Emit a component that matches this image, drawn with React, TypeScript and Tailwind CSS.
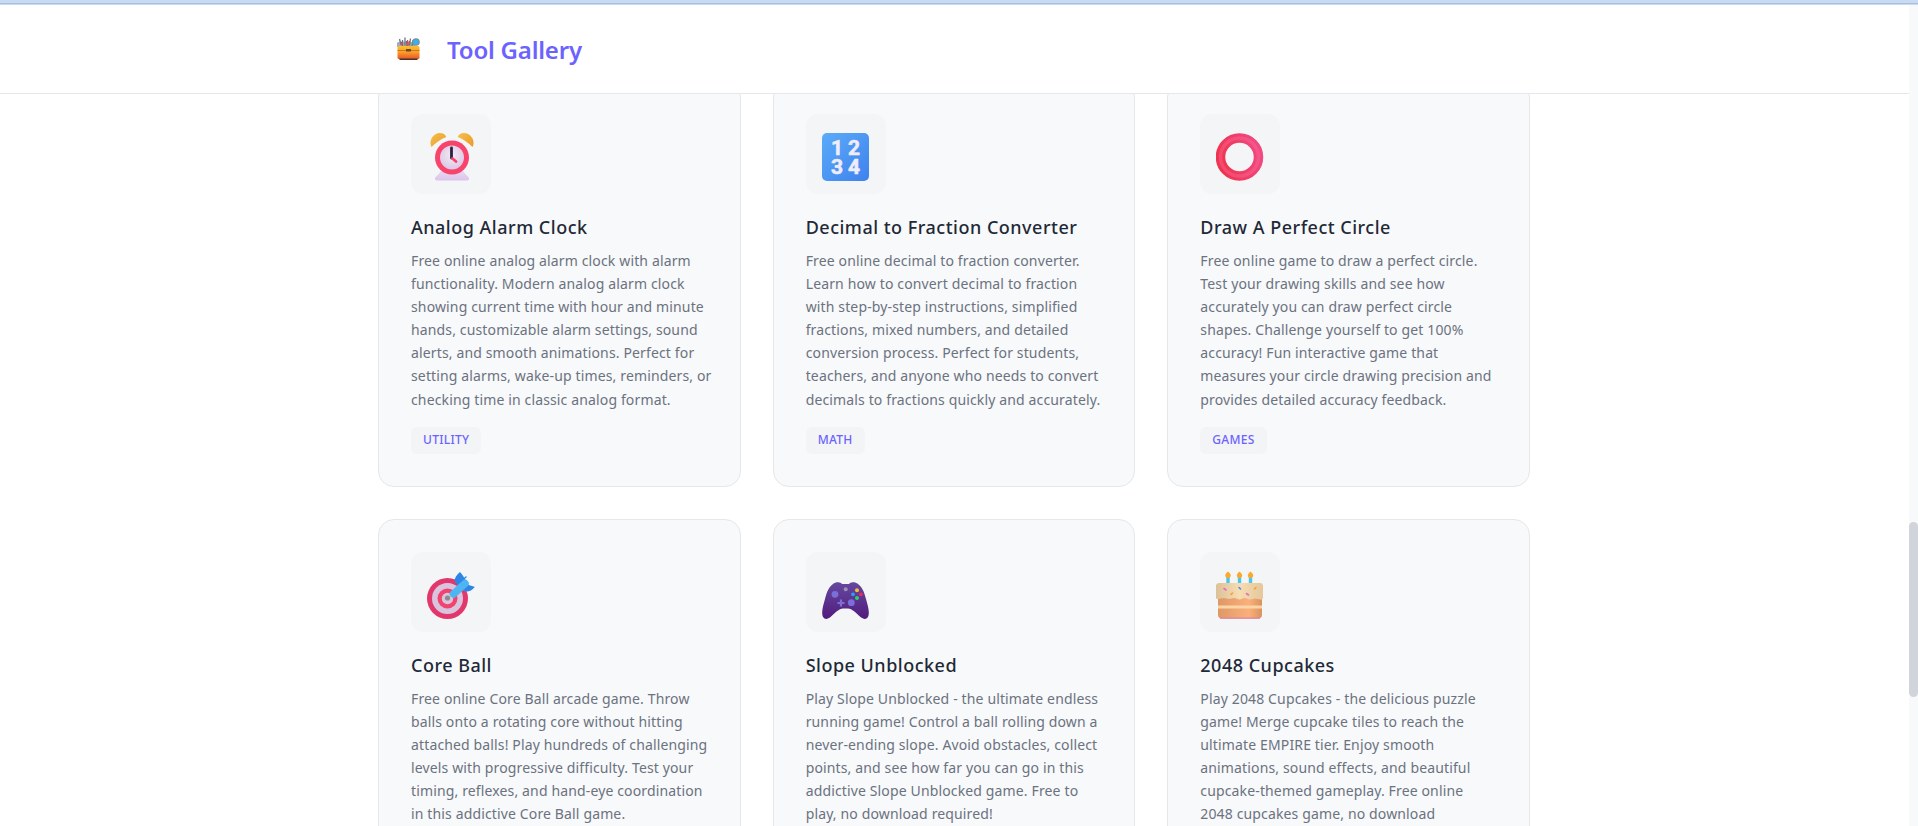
import React from "react";

const AlarmIcon = () => (
  <svg width="48" height="48" viewBox="0 0 48 48">
    <defs>
      <linearGradient id="bell" x1="0" y1="0" x2="1" y2="1"><stop offset="0" stopColor="#f7c04a" /><stop offset="1" stopColor="#e9992c" /></linearGradient>
      <linearGradient id="base" x1="0" y1="0" x2="0" y2="1"><stop offset="0" stopColor="#e8d8f0" /><stop offset="1" stopColor="#dcc4ec" /></linearGradient>
      <radialGradient id="face" cx="0.5" cy="0.4" r="0.65"><stop offset="0" stopColor="#f3ebf3" /><stop offset="1" stopColor="#dac4e6" /></radialGradient>
    </defs>
    <path d="M14 38H36C38 41 41 43 42 45C42.500 46.500 41.500 47.500 40 47.500H10C8.500 47.500 7.500 46.500 8 45C9 43 12 41 14 38z" fill="url(#base)" />
    <path d="M4.500 14C1 7.500 6.500 0 13 0c3 0 5.500 1.500 6.200 4C14 6 8.500 10 4.500 14z" fill="url(#bell)" />
    <path d="M45.500 14C49 7.500 43.500 0 37 0c-3 0-5.500 1.500-6.200 4C36 6 41.500 10 45.500 14z" fill="url(#bell)" />
    <circle cx="25" cy="24.500" r="17" fill="#f8436a" />
    <circle cx="25" cy="24.500" r="12" fill="url(#face)" />
    <path d="M24.500 15V25" stroke="#2c2140" strokeWidth="2.800" strokeLinecap="round" />
    <path d="M25.500 25.500l3.500 3" stroke="#f8436a" strokeWidth="2.800" strokeLinecap="round" />
  </svg>
);

const NumbersIcon = () => (
  <svg width="48" height="48" viewBox="0 0 48 48">
    <defs>
      <linearGradient id="num" x1="0" y1="0" x2="1" y2="1"><stop offset="0" stopColor="#5cabf8" /><stop offset="1" stopColor="#3e82ee" /></linearGradient>
    </defs>
    <rect x="0" y="0" width="47" height="48" rx="5" fill="url(#num)" />
    <g fill="#f0ecfc" stroke="#f0ecfc" strokeWidth="0.600" strokeLinejoin="round" fontFamily="Roboto, sans-serif" fontWeight="700" fontSize="21" textAnchor="middle">
      <text x="15" y="21.500">1</text>
      <text x="32" y="21.500">2</text>
      <text x="15" y="41">3</text>
      <text x="32" y="41">4</text>
    </g>
  </svg>
);

const RingIcon = () => (
  <svg width="48" height="48" viewBox="0 0 48 48">
    <defs>
      <linearGradient id="ring" x1="0" y1="0.6" x2="1" y2="0.3"><stop offset="0" stopColor="#ee3550" /><stop offset="1" stopColor="#f0487f" /></linearGradient>
    </defs>
    <circle cx="23.500" cy="24" r="19" fill="none" stroke="url(#ring)" strokeWidth="9.500" />
    <circle cx="23.500" cy="24" r="19" fill="none" stroke="#ff6a9e" strokeOpacity="0.4" strokeWidth="3.500" />
  </svg>
);

const TargetIcon = () => (
  <svg width="48" height="48" viewBox="0 0 48 48">
    <circle cx="20.500" cy="27.500" r="20.500" fill="#e2376b" />
    <circle cx="20.500" cy="27.500" r="15.500" fill="#d9c3dd" />
    <circle cx="20.500" cy="27.500" r="10" fill="#f0436f" />
    <circle cx="20.500" cy="27.500" r="5.700" fill="#d8c6da" />
    <circle cx="20.500" cy="27" r="2.600" fill="#8f8895" />
    <path d="M33 1c-3.500 3-5.500 6-5.500 9.500L37 20c3.500 1.500 7.500 0 10.800-4-2.500-1-5-1.200-6.800-2.500-.5-2-.5-3.500-2.500-4.500C37 6.500 35.500 3.500 33 1z" fill="#2d86e6" />
    <path d="M26.500 23L38 12.500" stroke="#4db6f2" strokeWidth="7.500" strokeLinecap="round" />
    <path d="M32.500 11.500L39 6" stroke="#2f8ce8" strokeWidth="1.500" strokeLinecap="round" />
  </svg>
);

const PadIcon = () => (
  <svg width="48" height="48" viewBox="0 0 48 48">
    <defs>
      <linearGradient id="pad" x1="0" y1="0" x2="0" y2="1"><stop offset="0" stopColor="#65499f" /><stop offset="1" stopColor="#521c7d" /></linearGradient>
    </defs>
    <path d="M11 13C13 11 17 10.500 19 12L20 13H27L28 12C30 10.500 34 11 36 13C40 16 42 20 44 28C46 35 48 42 46 46C44 49 41 48 38.500 46C34 42 30 37.500 26 37.500H21C17 37.500 13 42 8.500 46C6 48 3 49 1 46C-1 42 1 35 3 28C5 20 7 16 11 13z" fill="url(#pad)" />
    <circle cx="13" cy="23.300" r="3.400" fill="#7b6ed8" />
    <circle cx="29.300" cy="31.700" r="3.400" fill="#7b6ed8" />
    <path d="M15.500 32h7M19 28.500v7" stroke="#7b6ed8" strokeWidth="2.200" />
    <circle cx="23.700" cy="18.300" r="2" fill="#a08fb4" />
    <circle cx="35" cy="19.300" r="2" fill="#f7bc3c" />
    <circle cx="31" cy="23.300" r="1.900" fill="#2f9cf4" />
    <circle cx="39" cy="23.300" r="1.900" fill="#ef2a58" />
    <circle cx="35" cy="27" r="2" fill="#2bd06f" />
  </svg>
);

const CakeIcon = () => (
  <svg width="48" height="48" viewBox="0 0 48 48">
    <defs>
      <linearGradient id="ice" x1="0" y1="0" x2="1" y2="0"><stop offset="0" stopColor="#dcc198" /><stop offset="0.5" stopColor="#f8dcb2" /><stop offset="1" stopColor="#e4c89c" /></linearGradient>
      <linearGradient id="body" x1="0" y1="0" x2="1" y2="0"><stop offset="0" stopColor="#dd9866" /><stop offset="0.7" stopColor="#fbb07b" /><stop offset="1" stopColor="#d9935f" /></linearGradient>
    </defs>
    {[12, 23.500, 34.500].map((x) => (
      <g key={x}>
        <rect x={x - 1.700} y="6" width="3.400" height="7" fill="#4bc7ee" />
        <path d={`M${x} 0.500c1.500 1.500 2.700 2.700 2.700 4s-1.200 2.500-2.700 2.500-2.700-1.200-2.700-2.500 1.200-2.500 2.700-4z`} fill="#ffa726" />
      </g>
    ))}
    <path d="M2 26h44v18c0 2-1.500 3.500-3.500 3.500h-37C3.500 47.500 2 46 2 44z" fill="url(#body)" />
    <rect x="2" y="34.500" width="44" height="3" fill="#fbd5a5" />
    <path d="M4 47.200h40" stroke="#e37fa0" strokeWidth="1.200" />
    <path d="M0 15c0-2 1.500-3 3-3h41c2 0 3 1 3 3v12c0 1-1 1.500-2.500 1.500-2.500 0-3.500-1-5.500-1s-3 1-5 1-3.500-1.500-5.500-1.500-3 1.500-5 1.500-3-1.500-5.500-1.500-3 1-5 1-3-1-5-1S2 28.500 1 28c-1-.4-1-1-1-2z" fill="url(#ice)" />
    <path d="M8 17.500l2 1.500M30.500 22.500l2 1.500" stroke="#e36fc0" strokeWidth="1.600" strokeLinecap="round" />
    <path d="M38.500 18l1.500-1.500M15 23.500l1.500-1.500" stroke="#f4a22f" strokeWidth="1.600" strokeLinecap="round" />
    <path d="M23 16.500l1.500 1.500" stroke="#4c8be8" strokeWidth="1.600" strokeLinecap="round" />
  </svg>
);

const ToolboxIcon = () => (
  <svg width="24" height="24" viewBox="0 0 24 24">
    <defs>
      <linearGradient id="tb" x1="0" y1="0" x2="0" y2="1"><stop offset="0" stopColor="#fcc02e" /><stop offset="0.45" stopColor="#f9a02c" /><stop offset="1" stopColor="#ec5424" /></linearGradient>
    </defs>
    <path d="M0.500 5.500l4-1 14 0.500v5H0.500z" fill="#a3adba" />
    <path d="M3 2l1.500 6M6 3v6M8.500 0.500v8M11 3l.5 6M14 1.500l-1 7M16.500 3l-1 6" stroke="#6b7688" strokeWidth="1.300" />
    <path d="M5 5l1 4M10 4l.5 5M13 4l-.5 4" stroke="#d9453a" strokeWidth="1.200" />
    <circle cx="19.500" cy="5" r="3.200" fill="#35b4e8" stroke="#7d8ea0" strokeWidth="1.200" />
    <rect x="1" y="9" width="22" height="13" rx="1.500" fill="url(#tb)" />
    <rect x="1" y="13" width="22" height="0.800" fill="#c9641c" />
    <rect x="9.500" y="12" width="5" height="2.500" fill="#6a4a1e" />
    <rect x="3" y="21.500" width="18" height="1.500" fill="#44342c" />
  </svg>
);

type Tool = { icon: React.ReactNode; title: string; lines: string[]; tag: string };

const tools: Tool[] = [
  {
    icon: <AlarmIcon />,
    title: "Analog Alarm Clock",
    lines: [
      "Free online analog alarm clock with alarm",
      "functionality. Modern analog alarm clock",
      "showing current time with hour and minute",
      "hands, customizable alarm settings, sound",
      "alerts, and smooth animations. Perfect for",
      "setting alarms, wake-up times, reminders, or",
      "checking time in classic analog format.",
    ],
    tag: "Utility",
  },
  {
    icon: <NumbersIcon />,
    title: "Decimal to Fraction Converter",
    lines: [
      "Free online decimal to fraction converter.",
      "Learn how to convert decimal to fraction",
      "with step-by-step instructions, simplified",
      "fractions, mixed numbers, and detailed",
      "conversion process. Perfect for students,",
      "teachers, and anyone who needs to convert",
      "decimals to fractions quickly and accurately.",
    ],
    tag: "Math",
  },
  {
    icon: <RingIcon />,
    title: "Draw A Perfect Circle",
    lines: [
      "Free online game to draw a perfect circle.",
      "Test your drawing skills and see how",
      "accurately you can draw perfect circle",
      "shapes. Challenge yourself to get 100%",
      "accuracy! Fun interactive game that",
      "measures your circle drawing precision and",
      "provides detailed accuracy feedback.",
    ],
    tag: "Games",
  },
  {
    icon: <TargetIcon />,
    title: "Core Ball",
    lines: [
      "Free online Core Ball arcade game. Throw",
      "balls onto a rotating core without hitting",
      "attached balls! Play hundreds of challenging",
      "levels with progressive difficulty. Test your",
      "timing, reflexes, and hand-eye coordination",
      "in this addictive Core Ball game.",
    ],
    tag: "Games",
  },
  {
    icon: <PadIcon />,
    title: "Slope Unblocked",
    lines: [
      "Play Slope Unblocked - the ultimate endless",
      "running game! Control a ball rolling down a",
      "never-ending slope. Avoid obstacles, collect",
      "points, and see how far you can go in this",
      "addictive Slope Unblocked game. Free to",
      "play, no download required!",
    ],
    tag: "Games",
  },
  {
    icon: <CakeIcon />,
    title: "2048 Cupcakes",
    lines: [
      "Play 2048 Cupcakes - the delicious puzzle",
      "game! Merge cupcake tiles to reach the",
      "ultimate EMPIRE tier. Enjoy smooth",
      "animations, sound effects, and beautiful",
      "cupcake-themed gameplay. Free online",
      "2048 cupcakes game, no download",
      "required!",
    ],
    tag: "Games",
  },
];

const Card = ({ tool }: { tool: Tool }) => (
  <div className="bg-[#f8f9fa] border border-[#e5e7eb] rounded-2xl p-8 flex flex-col">
    <div className="w-20 h-20 rounded-xl bg-[#f4f5f7] flex items-center justify-center pt-[6px] mb-5">{tool.icon}</div>
    <h3 className="text-lg font-medium leading-[27px] text-[#1f2937] mb-2 tracking-[0.5px]">{tool.title}</h3>
    <p className="text-sm leading-[23.100px] text-[#6b7280] mb-4 tracking-[0.14px]">
      {tool.lines.map((l) => (
        <span key={l} className="block whitespace-nowrap">{l}</span>
      ))}
    </p>
    <div className="flex">
      <span className="bg-[#f3f4f6] rounded-md px-3 h-[27px] flex items-center text-xs font-medium uppercase tracking-[0.3px] text-[#6c63ff]">{tool.tag}</span>
    </div>
  </div>
);

export default function App() {
  return (
    <div className="h-[826px] w-[1918px] overflow-hidden flex flex-col bg-white font-['Noto_Sans','Liberation_Sans',sans-serif]">
      <div className="h-[5px] shrink-0 bg-[#c9dbf3] flex flex-col pt-[3px]">
        <div className="h-px bg-[#a9bfdf]" />
      </div>
      <div className="flex-1 min-h-0 flex">
        <div className="flex-1 min-w-0 flex flex-col">
          <header className="h-[89px] shrink-0 border-b border-[#e5e7eb] bg-white">
            <div className="w-[1152px] mx-auto h-full flex items-center -translate-x-[0.5px] pl-[18px]">
              <ToolboxIcon />
              <span className="ml-[27px] pt-[2px] text-2xl font-semibold text-[#6c63ff] tracking-[-0.2px]">Tool Gallery</span>
            </div>
          </header>
          <main className="flex-1 min-h-0 overflow-hidden pr-px">
            <div className="w-[1152px] mx-auto -mt-[13px] grid grid-cols-3 gap-8">
              {tools.map((t) => (
                <Card key={t.title} tool={t} />
              ))}
            </div>
          </main>
        </div>
        <aside className="w-[9px] shrink-0 bg-[#f8f9fa] pt-[517px]">
          <div className="h-[175px] bg-[#d1d5db] rounded-md" />
        </aside>
      </div>
    </div>
  );
}
